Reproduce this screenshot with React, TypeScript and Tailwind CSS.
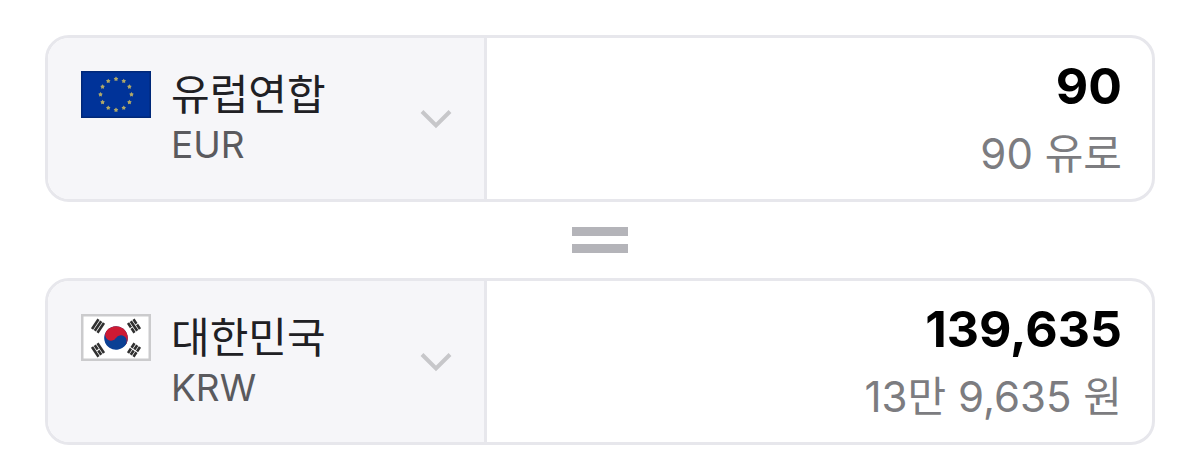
import React, { useState } from 'react';

type CurrencyCode = 'EUR' | 'KRW';

interface Currency {
  country: string;
  rate: number; // value of one unit in won
  format: (amount: number) => string;
}

const EuFlag: React.FC = () => (
  <svg viewBox="0 0 70 47" className="w-[70px] h-[47px] shrink-0" aria-hidden="true">
    <rect width="70" height="47" fill="#002878" />
    <rect x="1.5" y="1.5" width="67" height="44" fill="#003399" />
    {Array.from({ length: 12 }, (_, i) => {
      const angle = (i * Math.PI) / 6;
      const cx = 35 + 15.5 * Math.sin(angle);
      const cy = 23.5 - 15.5 * Math.cos(angle);
      const points = Array.from({ length: 10 }, (_, p) => {
        const r = p % 2 === 0 ? 2.4 : 1.4;
        const a = (p * Math.PI) / 5;
        return `${cx + r * Math.sin(a)},${cy - r * Math.cos(a)}`;
      }).join(' ');
      return <polygon key={i} points={points} fill="#b0a868" />;
    })}
  </svg>
);

// Each trigram is three bars; a broken bar has a gap in the middle
const trigrams = [
  { x: 17, y: 12, rotate: -56, broken: [false, false, false] },
  { x: 53, y: 12, rotate: 56, broken: [true, false, true] },
  { x: 17, y: 36, rotate: 56, broken: [false, true, false] },
  { x: 53, y: 36, rotate: -56, broken: [true, true, true] },
];

const KoreaFlag: React.FC = () => (
  <svg viewBox="0 0 70 47" className="w-[70px] h-[47px] shrink-0" aria-hidden="true">
    <rect x="1.25" y="1.25" width="67.5" height="44.5" fill="#fff" stroke="#cbcbcd" strokeWidth="2.5" />
    <g transform="rotate(33.7 35 24)">
      <circle cx="35" cy="24" r="11.8" fill="#0b4094" />
      <path d="M23.2 24a11.8 11.8 0 0 1 23.6 0Z" fill="#cd1a33" />
      <circle cx="29.1" cy="24" r="5.9" fill="#cd1a33" />
      <circle cx="40.9" cy="24" r="5.9" fill="#0b4094" />
    </g>
    {trigrams.map((t) => (
      <g key={`${t.x}-${t.y}`} transform={`translate(${t.x} ${t.y}) rotate(${t.rotate})`} stroke="#303030" strokeWidth="2.6">
        {t.broken.map((broken, i) => (
          <path key={i} d={broken ? 'M-5.8 0h5.3M0.5 0h5.3' : 'M-5.8 0h11.6'} transform={`translate(0 ${(i - 1) * 3.3})`} />
        ))}
      </g>
    ))}
  </svg>
);

const formatWon = (amount: number) => {
  const value = Math.round(amount);
  const man = Math.floor(value / 10000);
  const rest = value % 10000;
  if (man === 0) return `${rest.toLocaleString('en-US')} 원`;
  return rest === 0 ? `${man.toLocaleString('en-US')}만 원` : `${man.toLocaleString('en-US')}만 ${rest.toLocaleString('en-US')} 원`;
};

const currencies: Record<CurrencyCode, Currency> = {
  EUR: { country: '유럽연합', rate: 1551.5, format: (n) => `${n.toLocaleString('en-US')} 유로` },
  KRW: { country: '대한민국', rate: 1, format: formatWon },
};

interface CurrencyRowProps {
  id: string;
  code: CurrencyCode;
  amount: number;
  onCodeChange: (code: CurrencyCode) => void;
  onAmountChange: (amount: number) => void;
}

const CurrencyRow: React.FC<CurrencyRowProps> = ({ id, code, amount, onCodeChange, onAmountChange }) => {
  const currency = currencies[code];

  return (
    <div className="flex border-3 border-[#e7e7ec] rounded-3xl overflow-hidden bg-white">
      <div className="w-[39.8%] shrink-0 flex items-center justify-between bg-[#f6f6f9] border-r-3 border-[#e7e7ec] pl-[33px] pr-8">
        <div className="flex items-start gap-5 pt-[5px]">
          {code === 'EUR' ? <EuFlag /> : <KoreaFlag />}
          <div className="flex flex-col">
            <select
              id={`${id}-currency`}
              aria-label="통화 선택"
              value={code}
              onChange={(e) => onCodeChange(e.target.value as CurrencyCode)}
              className="appearance-none bg-transparent outline-none cursor-pointer h-12 text-[42px] leading-[48px] text-[#202024]"
            >
              {(Object.keys(currencies) as CurrencyCode[]).map((c) => (
                <option key={c} value={c}>
                  {currencies[c].country}
                </option>
              ))}
            </select>
            <label htmlFor={`${id}-currency`} className="text-[37px] leading-[52px] text-[#5a5a5e]">
              {code}
            </label>
          </div>
        </div>
        <svg viewBox="0 0 32 20" className="w-8 h-5 shrink-0" fill="none" stroke="#c7c7ca" strokeWidth="4" aria-hidden="true">
          <path d="M2 2.5L16 16.5L30 2.5" />
        </svg>
      </div>
      <div className="flex-1 min-w-0 flex flex-col items-end gap-2 pt-[18px] pb-[15px] pr-[30px]">
        <input
          id={`${id}-amount`}
          type="text"
          inputMode="decimal"
          aria-label={`${currency.country} 금액`}
          value={amount.toLocaleString('en-US')}
          onChange={(e) => onAmountChange(Number(e.target.value.replace(/[^0-9.]/g, '')))}
          className="w-full h-15 bg-transparent outline-none text-right text-[50px] font-bold text-black"
        />
        <label htmlFor={`${id}-amount`} className="text-[42px] leading-[60px] text-[#7c7c80] whitespace-nowrap">
          {currency.format(amount)}
        </label>
      </div>
    </div>
  );
};

export default function App() {
  const [from, setFrom] = useState<CurrencyCode>('EUR');
  const [to, setTo] = useState<CurrencyCode>('KRW');
  const [amount, setAmount] = useState(90);

  const ratio = currencies[from].rate / currencies[to].rate;
  const converted = Math.round(amount * ratio * 100) / 100;

  return (
    <main className="px-[45px] pt-[35px] pb-[26px] bg-white font-['Inter','Noto_Sans_CJK_KR',sans-serif]">
      <CurrencyRow id="from" code={from} amount={amount} onCodeChange={setFrom} onAmountChange={setAmount} />
      <div className="h-19 flex flex-col items-center justify-center gap-2" role="img" aria-label="같음">
        <div className="w-14 h-[9px] bg-[#b4b4b9]" />
        <div className="w-14 h-[9px] bg-[#b4b4b9]" />
      </div>
      <CurrencyRow
        id="to"
        code={to}
        amount={converted}
        onCodeChange={setTo}
        onAmountChange={(value) => setAmount(Math.round((value / ratio) * 100) / 100)}
      />
    </main>
  );
}
